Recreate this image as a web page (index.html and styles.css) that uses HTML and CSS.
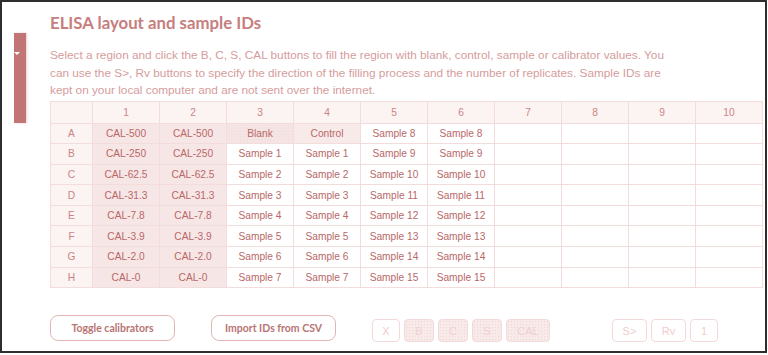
FILE: index.html
```html
<!DOCTYPE html>
<html lang="en">
<head>
  <meta charset="UTF-8" />
  <meta name="viewport" content="width=device-width, initial-scale=1.0"/>
  <title>ELISA layout and sample IDs</title>
  <link rel="stylesheet" href="styles.css">
</head>
<body>
  <div class="frame">
    <!--ABA LATERAL-->
    <aside class="tab"><span class="caret"></span></aside>

    <main class="panel">
      <h1>ELISA layout and sample IDs</h1>
      <p class="intro">Select a region and click the B, C, S, CAL buttons to fill the region with blank, control, sample or calibrator values. You can use the S&gt;, Rv buttons to specify the direction of the filling process and the number of replicates. Sample IDs are kept on your local computer and are not sent over the internet.</p>

      <table class="plate">
        <colgroup>
          <col class="c-row">
          <col><col><col><col><col><col><col><col><col><col>
        </colgroup>
        <thead>
          <tr>
            <th></th>
            <th>1</th><th>2</th><th>3</th><th>4</th><th>5</th>
            <th>6</th><th>7</th><th>8</th><th>9</th><th>10</th>
          </tr>
        </thead>
        <tbody>
          <tr>
            <th>A</th>
            <td class="cal">CAL-500</td><td class="cal">CAL-500</td>
            <td class="blank">Blank</td><td class="ctrl">Control</td>
            <td>Sample 8</td><td>Sample 8</td>
            <td></td><td></td><td></td><td></td>
          </tr>
          <tr>
            <th>B</th>
            <td class="cal">CAL-250</td><td class="cal">CAL-250</td>
            <td>Sample 1</td><td>Sample 1</td>
            <td>Sample 9</td><td>Sample 9</td>
            <td></td><td></td><td></td><td></td>
          </tr>
          <tr>
            <th>C</th>
            <td class="cal">CAL-62.5</td><td class="cal">CAL-62.5</td>
            <td>Sample 2</td><td>Sample 2</td>
            <td>Sample 10</td><td>Sample 10</td>
            <td></td><td></td><td></td><td></td>
          </tr>
          <tr>
            <th>D</th>
            <td class="cal">CAL-31.3</td><td class="cal">CAL-31.3</td>
            <td>Sample 3</td><td>Sample 3</td>
            <td>Sample 11</td><td>Sample 11</td>
            <td></td><td></td><td></td><td></td>
          </tr>
          <tr>
            <th>E</th>
            <td class="cal">CAL-7.8</td><td class="cal">CAL-7.8</td>
            <td>Sample 4</td><td>Sample 4</td>
            <td>Sample 12</td><td>Sample 12</td>
            <td></td><td></td><td></td><td></td>
          </tr>
          <tr>
            <th>F</th>
            <td class="cal">CAL-3.9</td><td class="cal">CAL-3.9</td>
            <td>Sample 5</td><td>Sample 5</td>
            <td>Sample 13</td><td>Sample 13</td>
            <td></td><td></td><td></td><td></td>
          </tr>
          <tr>
            <th>G</th>
            <td class="cal">CAL-2.0</td><td class="cal">CAL-2.0</td>
            <td>Sample 6</td><td>Sample 6</td>
            <td>Sample 14</td><td>Sample 14</td>
            <td></td><td></td><td></td><td></td>
          </tr>
          <tr>
            <th>H</th>
            <td class="cal">CAL-0</td><td class="cal">CAL-0</td>
            <td>Sample 7</td><td>Sample 7</td>
            <td>Sample 15</td><td>Sample 15</td>
            <td></td><td></td><td></td><td></td>
          </tr>
        </tbody>
      </table>

      <!--BOTOES-->
      <div class="toolbar">
        <button class="pill">Toggle calibrators</button>
        <button class="pill">Import IDs from CSV</button>

        <div class="group fill">
          <button class="key" disabled>X</button>
          <button class="key on" disabled>B</button>
          <button class="key on" disabled>C</button>
          <button class="key on" disabled>S</button>
          <button class="key on wide" disabled>CAL</button>
        </div>

        <div class="group dir">
          <button class="key mid" disabled>S&gt;</button>
          <button class="key mid" disabled>Rv</button>
          <button class="key" disabled>1</button>
        </div>
      </div>
    </main>
  </div>
</body>
</html>
```

FILE: styles.css
```css
:root {
  --rosa: #c17575;
  --titulo: #c67e7e;
  --texto: #d59c9c;
  --celula: #b86868;
  --cabecalho: #c98585;
  --borda: #f3dcdc;
  --fundo-cab: #fcf3f3;
  --fundo-cal: #f7e6e6;
  --apagado: #f0cccc;
}

* {
  margin: 0;
  padding: 0;
  box-sizing: border-box;
}

body {
  background-color: #fff;
  font-family: 'Liberation Sans', Arial, sans-serif;
}

.frame {
  width: 767px;
  height: 353px;
  border: 2px solid #2e2e2e;
  display: flex;
  align-items: flex-start;
  overflow: hidden;
}

.tab {
  width: 12px;
  height: 90px;
  margin: 31px 0 0 12px;
  background-color: var(--rosa);
  box-shadow: 1px 0 2px rgba(193, 117, 117, 0.35);
  position: relative;
  flex-shrink: 0;
}

.caret {
  position: absolute;
  top: 19px;
  left: 0;
  border-top: 3px solid #fff;
  border-left: 3px solid transparent;
  border-right: 3px solid transparent;
}

.panel {
  margin-left: 24px;
  padding-top: 10px;
}

h1 {
  font-family: 'Lato', sans-serif;
  font-weight: 700;
  font-size: 16.8px;
  line-height: 21px;
  color: var(--titulo);
  margin-bottom: 14px;
}

.intro {
  width: 624px;
  font-size: 11.8px;
  line-height: 17.5px;
  color: var(--texto);
}

.plate {
  border-collapse: collapse;
  table-layout: fixed;
  width: 712px;
  margin-top: 1px;
  font-size: 10.2px;
  color: var(--celula);
}

.plate col {
  width: 67px;
}

.plate col.c-row {
  width: 42px;
}

.plate th,
.plate td {
  border: 1px solid var(--borda);
  text-align: center;
  font-weight: 400;
  height: 20.6px;
}

.plate thead th {
  height: 22px;
  background-color: var(--fundo-cab);
  color: var(--cabecalho);
}

.plate tbody th {
  background-color: var(--fundo-cab);
  color: var(--cabecalho);
}

.plate td.cal {
  background-color: var(--fundo-cal);
}

.plate td.blank {
  background-color: #f5e5e5;
  background-image: radial-gradient(#ecd3d3 0.6px, transparent 0.8px);
  background-size: 3px 3px;
}

.plate td.ctrl {
  background-color: #f9eaea;
}

.toolbar {
  display: flex;
  align-items: flex-end;
  margin-top: 27px;
}

button {
  font-family: inherit;
  background: #fff;
  cursor: pointer;
}

.pill {
  width: 125px;
  height: 26px;
  border: 1px solid #e3b5b5;
  border-radius: 8px;
  font-family: 'Lato', sans-serif;
  font-weight: 700;
  font-size: 10.5px;
  color: #b87474;
  margin-right: 36px;
}

.group {
  display: flex;
  gap: 4px;
}

.dir {
  margin-left: 62px;
}

.key {
  width: 28px;
  height: 23px;
  border: 1px solid #f3dada;
  border-radius: 4px;
  font-size: 11px;
  color: var(--apagado);
  margin-bottom: -1px;
}

.key.on {
  width: 30px;
  background-color: #f9eaea;
  background-image: radial-gradient(#f0d6d6 0.6px, transparent 0.8px);
  background-size: 3px 3px;
  color: #f0d0d0;
}

.key.wide {
  width: 44px;
}

.key.mid {
  width: 35px;
}
```
